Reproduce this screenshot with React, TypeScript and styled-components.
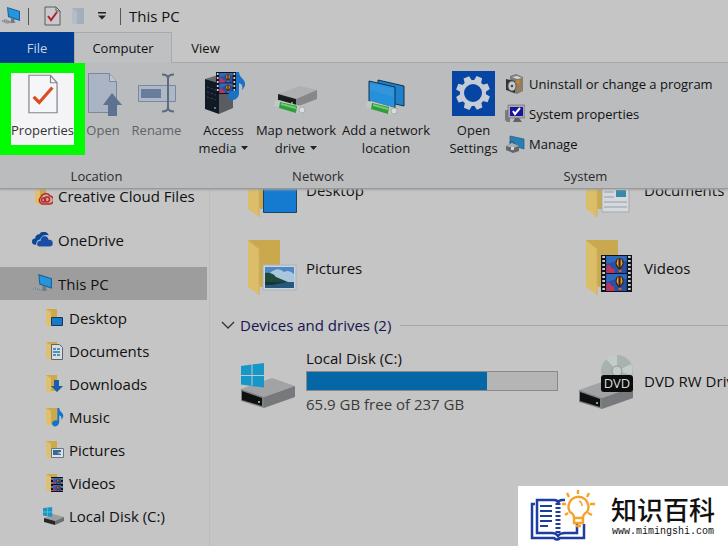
import React from "react";
import styled, { createGlobalStyle, css } from "styled-components";

const GlobalStyle = createGlobalStyle`
  *, *::before, *::after { box-sizing: border-box; }
  body { margin: 0; background: #c5c5c5; }
  button { font: inherit; color: inherit; background: none; border: 0; padding: 0; cursor: pointer; }
  svg { display: block; flex: none; }
`;

const Window = styled.div`
  height: 100vh;
  display: flex;
  flex-direction: column;
  overflow: hidden;
  background: #c5c5c5;
  color: #111;
  font-family: "Open Sans", "Noto Sans", sans-serif;
  font-size: 15px;
  line-height: 18px;
  white-space: nowrap;
`;

const TitleBar = styled.header`
  display: flex;
  align-items: center;
  height: 32px;
  flex: none;
  padding-left: 1px;
`;

const QuickButton = styled.button<{ $width: number }>`
  display: flex;
  justify-content: center;
  width: ${(p) => p.$width}px;
`;

const Separator = styled.span`
  width: 1px;
  height: 17px;
  background: #555;
`;

const WindowTitle = styled.h1`
  display: flex;
  align-items: center;
  gap: 8px;
  margin: 0 0 0 3px;
  font-size: 15px;
  font-weight: 400;
`;

const Tabs = styled.nav`
  display: flex;
  flex: none;
  height: 31px;
  border-bottom: 1px solid #a9a9aa;
`;

const Tab = styled.button<{ $kind: "file" | "active" | "plain"; $width: number }>`
  width: ${(p) => p.$width}px;
  height: 31px;
  font-size: 13px;
  ${(p) => p.$kind === "file" && css`background: #003d93; color: #c9d3e2;`}
  ${(p) =>
    p.$kind === "active" &&
    css`
      background: #bfc0c1;
      border: 1px solid #a9a9aa;
      border-bottom: 0;
    `}
`;

const Ribbon = styled.section`
  display: flex;
  flex: none;
  height: 126px;
  background: #bbbcbe;
  border-bottom: 1px solid #999;
  box-shadow: 0 1px 2px #a3a3a3;
  position: relative;
  font-size: 13px;
`;

const Group = styled.div<{ $width?: number }>`
  display: flex;
  flex-direction: column;
  ${(p) => (p.$width ? css`width: ${p.$width}px; flex: none;` : css`flex: 1;`)}
  & + &::before {
    content: "";
    position: absolute;
    width: 1px;
    height: 118px;
    margin: 3px 0 0 -1px;
    background: #a6a6a8;
  }
`;

const GroupTools = styled.div`
  display: flex;
  align-items: flex-start;
  height: 104px;
`;

const GroupLabel = styled.div`
  text-align: center;
  color: #2b2b2b;
`;

const Tool = styled.button<{ $width: number; $disabled?: boolean }>`
  display: flex;
  flex-direction: column;
  align-items: center;
  width: ${(p) => p.$width}px;
  height: 92px;
  padding-top: 6px;
  color: ${(p) => (p.$disabled ? "#5f6268" : "#161616")};
  svg.icon { margin-bottom: 4px; }
`;

const HighlightedTool = styled(Tool)`
  border: 10px solid #00fc00;
  border-width: 10px 11px;
  padding-top: 0;
  background: #f4f4f7;
  color: #333;
  svg.icon { margin: 1px 0 7px; }
`;

const ToolLine = styled.span`
  display: flex;
  align-items: center;
  justify-content: center;
  gap: 5px;
  height: 18px;
`;

const CommandList = styled.div`
  display: flex;
  flex-direction: column;
  padding: 6px 0 0 1px;
`;

const Command = styled.button`
  display: flex;
  align-items: center;
  gap: 4px;
  height: 30px;
  text-align: left;
`;

const Body = styled.div`
  display: flex;
  flex: 1;
  min-height: 0;
  overflow: hidden;
`;

const Sidebar = styled.nav`
  width: 210px;
  flex: none;
  border-right: 1px solid #bcbcbc;
`;

const Tree = styled.ul`
  list-style: none;
  margin: -10px 2px 0 0;
  padding: 0;
`;

const SubTree = styled.ul`
  list-style: none;
  margin: 0;
  padding: 1px 0 0;
`;

const TreeItem = styled.li<{ $spaced?: boolean }>`
  margin-bottom: ${(p) => (p.$spaced ? 11 : 0)}px;
`;

const TreeButton = styled.button<{ $nested?: boolean; $selected?: boolean }>`
  display: flex;
  align-items: center;
  gap: 5px;
  width: 100%;
  height: 33px;
  padding-left: ${(p) => (p.$nested ? 43 : 32)}px;
  background: ${(p) => (p.$selected ? "#9d9d9d" : "transparent")};
`;

const Main = styled.main`
  flex: 1;
  min-width: 0;
  overflow: hidden;
  padding-left: 11px;
`;

const Folders = styled.div`
  display: grid;
  grid-template-columns: repeat(2, 338px);
  grid-auto-rows: 78px;
  margin-top: -38px;
  padding-left: 25px;
`;

const FolderItem = styled.button`
  display: flex;
  align-items: center;
  gap: 8px;
  text-align: left;
`;

const SectionHeading = styled.h2`
  display: flex;
  align-items: center;
  gap: 5px;
  margin: 6px 0 0;
  height: 24px;
  font-size: 15px;
  font-weight: 400;
  color: #14144f;
  &::after {
    content: "";
    flex: 1;
    height: 1px;
    margin-left: 4px;
    background: #a6a6a6;
  }
`;

const Drives = styled.div`
  display: grid;
  grid-template-columns: repeat(2, 338px);
  padding: 10px 0 0 19px;
`;

const Drive = styled.div`
  display: flex;
  align-items: center;
  gap: 10px;
  height: 68px;
`;

const DriveInfo = styled.div`
  display: flex;
  flex-direction: column;
  gap: 4px;
`;

const Meter = styled.div`
  width: 252px;
  height: 20px;
  border: 1px solid #898989;
  background: #b5b5b5;
`;

const MeterFill = styled.div`
  height: 100%;
  background: #0567a5;
`;

const Muted = styled.span`
  color: #3b3b3b;
`;

const Watermark = styled.aside`
  position: absolute;
  right: 0;
  bottom: 0;
  display: flex;
  align-items: center;
  gap: 14px;
  width: 210px;
  height: 60px;
  padding-left: 12px;
  background: #fff;
  color: #111;
`;

const Brand = styled.div`
  text-align: center;
`;

const BrandName = styled.div`
  font: 500 26px/32px "Noto Sans CJK SC", sans-serif;
`;

const BrandUrl = styled.div`
  font: 10px/14px "Liberation Mono", monospace;
`;

/* ---------- icons ---------- */

const Monitor = ({ size = 20 }: { size?: number }) => (
  <svg width={size} height={size} viewBox="0 0 20 20">
    <path d="M6 1 19 5v10L7 11z" fill="#1c5f94" />
    <path d="M7 2.300 18 5.800v7.800L8 10.200z" fill="#2496dc" />
    <path d="m10 12 4 1.500-1 1.800 2 1-4 1-3-1.500 2-.8z" fill="#6d7880" />
    <path d="m0 15 5-2 6 3-5 2z" fill="#9da5aa" />
    <path d="m1 15 8 2M3 14l8 2.500" stroke="#777f84" strokeDasharray="1 1" />
  </svg>
);

const CheckPage = ({ width, height, className }: { width: number; height: number; className?: string }) => (
  <svg className={className} width={width} height={height} viewBox="0 0 32 42" fill="none">
    <path d="M1 1h23l7 8v32H1z" fill="#f5f6fa" stroke="#83858a" strokeWidth="1.3" />
    <path d="M24 1v8h7" stroke="#83858a" strokeWidth="1.3" />
    <path d="m6 24 6 6 14-16" stroke="#d94e1c" strokeWidth="3.4" />
  </svg>
);

const QuickCheck = () => (
  <svg width="17" height="20" viewBox="0 0 17 20" fill="none">
    <path d="M1 1h11l4 4v14H1z" fill="#c9c9cd" stroke="#5c5c5f" />
    <path d="M12 1v4h4" stroke="#5c5c5f" />
    <path d="m4 10 3 4 6-8" stroke="#b0202b" strokeWidth="2" />
  </svg>
);

const QuickFolder = () => (
  <svg width="14" height="19" viewBox="0 0 14 19">
    <path d="M1 1h12v16H4z" fill="#a5afba" />
    <path d="m1 1 5 4v13l-5-2z" fill="#b2bdca" />
  </svg>
);

const Customize = () => (
  <svg width="8" height="8" viewBox="0 0 8 8">
    <path d="M0 0h8v1.5H0zM0 3.5h8L4 7.5z" fill="#222" />
  </svg>
);

const Caret = () => (
  <svg width="7" height="4" viewBox="0 0 7 4">
    <path d="M0 0h7L3.500 4z" fill="#222" />
  </svg>
);

const OpenIcon = () => (
  <svg className="icon" width="38" height="48" viewBox="0 0 38 48">
    <path d="M4.500 4.500h21l7 8v31h-28z" fill="#aab4c4" stroke="#7888a0" />
    <path d="M25.500 4.500v8h7" fill="#bfc6d2" stroke="#7888a0" />
    <path d="m28 24 10 12h-5v11h-9V36h-5z" fill="#5c7290" />
  </svg>
);

const RenameIcon = () => (
  <svg className="icon" width="40" height="48" viewBox="0 0 40 48" fill="none">
    <path d="M1.500 16.500h37v16h-37z" fill="#adb7c6" stroke="#7888a0" />
    <path d="M4 20h20v9H4z" fill="#687d99" />
    <path d="M25 5.500c4 0 6 1 6 4v29c0 3-2 4-6 4M37 5.500c-4 0-6 1-6 4v29c0 3 2 4 6 4" stroke="#5c6b80" strokeWidth="2" />
  </svg>
);

const Note = ({ x = 0, y = 0, scale = 1 }: { x?: number; y?: number; scale?: number }) => (
  <g transform={`translate(${x} ${y}) scale(${scale})`}>
    <path d="M8 0h3c0 6 7 7 6 13-1 3-2 4-3 5 1-4 0-6-3-7v10c0 4-3 7-6 7s-5-2-5-4c0-4 4-6 8-5z" fill="#1673c6" />
  </g>
);

const FilmStrip = ({ x, y, w, h }: { x: number; y: number; w: number; h: number }) => {
  const half = (h - 3) / 2;
  const edge = w * 0.17;
  const inner = w - edge * 2;
  return (
    <g transform={`translate(${x} ${y})`}>
      <path d={`M0 0h${w}v${h}H0z`} fill="#11131a" />
      {[1, 2 + half].map((top) => (
        <g key={top} transform={`translate(${edge} ${top}) scale(${inner / 20} ${half / 16})`}>
          <path d="M0 0h20v16H0z" fill="#2450a6" />
          <path d="M0 0h20v5Q10 3 0 8z" fill="#2f69bd" />
          <path d="M0 9l3-1 2 3 3 1v4H0z" fill="#b8365e" />
          <path d="M9 6q0-4 4-4t4 4q0 4-4 7-4-3-4-7z" fill="#3a2018" />
          <path d="M11 3h1v8l-2-4zM14 3h1l1 4-2 4z" fill="#e3a02b" />
          <path d="M12 13h3v2h-3z" fill="#c9632b" />
        </g>
      ))}
      <path
        d={`M${edge / 2} 1v${h - 2}M${w - edge / 2} 1v${h - 2}`}
        stroke="#cfd2d2"
        strokeWidth={edge * 0.5}
        strokeDasharray="2 2"
      />
    </g>
  );
};

const AccessIcon = () => (
  <svg className="icon" width="44" height="48" viewBox="0 0 44 48">
    <path d="m3 10 13-4 15 3-14 5z" fill="#676b70" />
    <path d="m3 10 14 4v31L3 40z" fill="#111923" />
    <path d="m17 14 14-4v29l-14 6z" fill="#595c61" />
    <path d="m5 18 9 3M5 23l9 3M5 28l9 3" stroke="#294779" strokeDasharray="2 2" />
    <circle cx="13" cy="39" r="1" fill="#4fa0df" />
    <FilmStrip x={14} y={3} w={20} h={22} />
    <Note x={26} y={3} />
  </svg>
);

const NetworkPipe = ({ y }: { y: number }) => (
  <g transform={`translate(0 ${y})`}>
    <path d="m2 0 4-1 25 7v5l-4 2L1 5z" fill="#c2c9c5" />
    <path d="m7 1 17 4-1 7L6 7z" fill="#2f9d3c" />
    <path d="m8 3 15 4" stroke="#73cc6e" strokeWidth="2" />
    <ellipse cx="29" cy="9" rx="3" ry="3" fill="#dadddb" stroke="#93a095" strokeWidth=".7" />
  </g>
);

const MapDriveIcon = () => (
  <svg className="icon" width="46" height="48" viewBox="0 0 46 48">
    <path d="m5 25 22-8 17 4-21 9z" fill="#aeb0b2" />
    <path d="m5 25 18 5v8L5 32z" fill="#191b1c" />
    <path d="m23 30 21-9v9l-21 8z" fill="#85878a" />
    <circle cx="19" cy="34" r="1" fill="#79dd77" />
    <NetworkPipe y={32} />
  </svg>
);

const AddLocationIcon = () => (
  <svg className="icon" width="42" height="48" viewBox="0 0 42 48">
    <path d="m13 11 26 6v20l-26-6z" fill="#1d82cb" stroke="#12304c" />
    <path d="m4 12 26 6v21L4 32z" fill="#2790dc" stroke="#12304c" />
    <path d="m5 14 24 6v8L5 21z" fill="#43a1df" opacity=".4" />
    <NetworkPipe y={33} />
  </svg>
);

const SettingsIcon = () => (
  <svg className="icon" width="43" height="48" viewBox="0 0 43 48">
    <path d="M0 2h43v45H0z" fill="#0745a5" />
    <g transform="translate(21 24)" fill="#c6ccd5">
      {[0, 45, 90, 135, 180, 225, 270, 315].map((a) => (
        <path key={a} d="M-4-11-3-17H3L4-11z" transform={`rotate(${a + 22})`} />
      ))}
      <circle r="11" fill="none" stroke="#c6ccd5" strokeWidth="4" />
    </g>
  </svg>
);

const UninstallIcon = () => (
  <svg width="20" height="22" viewBox="0 0 20 22">
    <path d="m5 3 6-2 7 3v14l-6 3-7-2z" fill="#7b7d79" />
    <path d="m7 4 5-1 5 2-5 1z" fill="#d6d5cf" />
    <path d="m12 7 5-2v13l-5 2z" fill="#9a7d58" />
    <circle cx="13" cy="9" r="2" fill="#c98132" />
    <path d="m1 6 9 2v12l-9-3z" fill="#303335" />
    <ellipse cx="7" cy="13" rx="4" ry="5" fill="#c6c9c8" stroke="#606466" />
    <circle cx="7" cy="13" r="1.300" fill="#454849" />
  </svg>
);

const SystemIcon = () => (
  <svg width="20" height="22" viewBox="0 0 20 22">
    <path d="M0 7h5v12H2l-2-2z" fill="#787b80" />
    <path d="M3 2h17v13H3z" fill="#a8a9a8" stroke="#646666" strokeWidth=".6" />
    <path d="M5 4h13v9H5z" fill="#1515a0" />
    <path d="m8 8 2 3 5-6" fill="none" stroke="#fff" strokeWidth="2" />
    <path d="M10 15h4l3 4H8z" fill="#5f6262" />
  </svg>
);

const ManageIcon = () => (
  <svg width="20" height="20" viewBox="0 0 20 20">
    <path d="m5 2 14 3v10L5 11z" fill="#277fb8" stroke="#295a79" strokeWidth=".7" />
    <path d="m1 12 6-3 7 3v5l-6 2-7-3z" fill="#62676b" />
    <path d="m1 12 6-3 7 3-6 2z" fill="#a9afb2" />
    <path d="M4 9q3-4 6 1" fill="none" stroke="#4f5356" />
    <path d="M6 13h3v3H6z" fill="#d4d6d3" />
  </svg>
);

const Cloud = () => (
  <svg width="21" height="15" viewBox="0 0 20 14">
    <path d="M4 12H3a3 3 0 0 1 0-6 4 4 0 0 1 4-4 5 5 0 0 1 9 1q-6-1-8 4-4 0-4 5z" fill="#0c4694" />
    <path d="M7 14a3 3 0 0 1 1-6 4 4 0 0 1 8-1 3.500 3.500 0 0 1 1 7z" fill="#164fa5" stroke="#c5c5c5" strokeWidth=".6" />
  </svg>
);

type Badge = "cloud" | "desktop" | "document" | "download" | "music" | "picture" | "video";

const SmallFolder = ({ badge }: { badge: Badge }) => (
  <svg width="21" height="20" viewBox="0 0 21 20">
    <path d="M3 1h11v16H7z" fill="#cda94c" />
    <path d="m3 1 5 3v15l-5-2z" fill="#dec06e" />
    {badge === "desktop" && <path d="M8.500 9.500h11v8h-11z" fill="#1679ca" stroke="#14385d" />}
    {badge === "document" && (
      <>
        <path d="M8.500 3.500h8l3 3v12h-11z" fill="#d9dde0" stroke="#596470" />
        <path d="M10 8h3m1 0h3M10 11h7M10 14h3m1 0h3" stroke="#2876aa" strokeWidth="1.500" />
      </>
    )}
    {badge === "download" && <path d="M11 6h5v6h4l-6 6-6-6h3z" fill="#195fa8" />}
    {badge === "music" && <Note x={9} y={1} scale={0.66} />}
    {badge === "picture" && (
      <>
        <path d="M8.500 8.500h12v9h-12z" fill="#dfe2e4" stroke="#687582" />
        <path d="M10 10h8v2l-4 1 4 1v1h-8z" fill="#356a98" />
      </>
    )}
    {badge === "video" && <FilmStrip x={8} y={4} w={12} h={15} />}
    {badge === "cloud" && (
      <g fill="none" stroke="#bd2921" strokeWidth="1.500">
        <path d="M10 18a4 4 0 0 1-1-7 5 5 0 0 1 9-1 4 4 0 0 1-1 8z" fill="#c5afaa" />
        <circle cx="11.500" cy="14" r="2" />
        <circle cx="15" cy="13.500" r="2.500" />
      </g>
    )}
  </svg>
);

const WindowsFlag = ({ x = 0, y = 0, scale = 1 }: { x?: number; y?: number; scale?: number }) => (
  <g transform={`translate(${x} ${y}) scale(${scale})`} fill="#1797c7">
    <path d="M0 3 10.500 1.500V12H0zM11.500 1.300 23 0v12H11.500zM0 13h10.500v10L0 21.500zM11.500 13H23v11.500l-11.500-1.300z" />
  </g>
);

const SmallDisk = () => (
  <svg width="21" height="18" viewBox="0 0 21 18">
    <path d="m1 11 9-4 11 3-9 4z" fill="#9c9ea0" />
    <path d="m1 11 11 3v4L1 15z" fill="#25282a" />
    <path d="m12 14 9-4v4l-9 4z" fill="#6d6f72" />
    <WindowsFlag scale={0.4} />
  </svg>
);

const BigFolder = ({ badge }: { badge: Badge }) => (
  <svg width="52" height="58" viewBox="0 0 52 58">
    <path d="M2 1h32v47H14z" fill="#c9a84e" />
    <path d="m2 1 11 9v46L2 48z" fill="#dcbd68" />
    <path d="m2 1 11 9v46" fill="none" stroke="#cfb064" />
    {badge === "desktop" && <path d="M17.500 27.500h33v24h-33z" fill="#147bd0" stroke="#164469" />}
    {badge === "document" && (
      <>
        <path d="M18 14h27v37H18z" fill="#d5d9dc" stroke="#a3a8ac" />
        <path d="M20 26h10M20 31h10M20 36h10M20 41h23M20 46h23M20 21h23" stroke="#8f9da8" />
        <path d="M32 29h10v7H32z" fill="#3a88a9" />
      </>
    )}
    {badge === "picture" && (
      <>
        <path d="M17 26h33v25H17z" fill="#c9d3d9" stroke="#a4b4c0" />
        <path d="M19 28h29v21H19z" fill="#4f86c3" />
        <path d="M24 34q8-7 14-1 5-3 10 2v8H24z" fill="#a9c6de" />
        <path d="M19 34q7-1 11 4l12 5H19z" fill="#1d4a38" />
        <path d="M19 43h29v6H19z" fill="#28577c" />
        <path d="M19 43h22l-15 3h-7z" fill="#17333c" />
      </>
    )}
    {badge === "video" && <FilmStrip x={17} y={16} w={31} h={37} />}
  </svg>
);

const DiskBase = () => (
  <>
    <path d="m1 38 31-11 23 8-31 11z" fill="#a2a3a5" />
    <path d="m1 38 23 8v11L1 50z" fill="#7f8183" />
    <path d="m24 46 31-11v11L24 57z" fill="#77797c" />
    <path d="m2 40 20 7v8L2 49z" fill="#0e1011" />
    <circle cx="19" cy="51" r="1" fill="#b4d7b4" />
  </>
);

const LocalDiskIcon = () => (
  <svg width="56" height="56" viewBox="0 2 56 56">
    <DiskBase />
    <WindowsFlag x={1} y={12} />
  </svg>
);

const DvdIcon = () => (
  <svg width="56" height="58" viewBox="0 0 56 58">
    <DiskBase />
    <circle cx="39" cy="19" r="16" fill="#a9b2af" />
    <path d="M39 19 28 7a16 16 0 0 1 11-4zM39 19l14-7a16 16 0 0 1 1 11z" fill="#c3cccb" />
    <circle cx="39" cy="19" r="5" fill="#c5cbc9" stroke="#929a98" />
    <rect x="23" y="23" width="32" height="17" rx="3" fill="#0b0c0c" />
    <text x="39" y="36" textAnchor="middle" fontFamily="Open Sans" fontSize="13" fill="#ddd">DVD</text>
  </svg>
);

const Chevron = () => (
  <svg width="14" height="8" viewBox="0 0 14 8">
    <path d="m1 1 6 6 6-6" fill="none" stroke="#333" strokeWidth="1.300" />
  </svg>
);

const BookIcon = () => (
  <svg width="67" height="52" viewBox="0 0 67 52" fill="none">
    <g stroke="#1d3e9f" strokeWidth="2.500">
      <path d="M5 14H2v34h22q3 3 6 0h24V34" />
      <path d="M24 10H7v33h15q4 0 6 3 2-3 7-3h12V34M24 10q4 0 4 3M28 13q1-3 4-3h3" />
      <path d="M10 16h12M10 21h12M10 26h12M10 31h12M10 36h8" strokeWidth="2" />
      <path d="M28 13v32" strokeWidth="5" strokeDasharray="2 2" />
    </g>
    <g stroke="#f5a22c" strokeWidth="2.400">
      <path d="M44 28q0-4-4-6a10 10 0 1 1 17 0q-4 2-4 6z" />
      <path d="M44 29v4h9v-4M46 36h5M48 0v4M37 3l2 4M59 3l-2 4M32 14h4M60 14h5M35 25l3-2M62 25l-4-2" />
      <path d="M49 11q3 1 3 5" strokeWidth="1.500" />
    </g>
  </svg>
);

/* ---------- page ---------- */

const places: { name: string; badge: Badge }[] = [
  { name: "Desktop", badge: "desktop" },
  { name: "Documents", badge: "document" },
  { name: "Downloads", badge: "download" },
  { name: "Music", badge: "music" },
  { name: "Pictures", badge: "picture" },
  { name: "Videos", badge: "video" },
];

const folders: { name: string; badge: Badge }[] = [
  { name: "Desktop", badge: "desktop" },
  { name: "Documents", badge: "document" },
  { name: "Pictures", badge: "picture" },
  { name: "Videos", badge: "video" },
];

export default function App() {
  return (
    <Window>
      <GlobalStyle />
      <TitleBar>
        <Monitor />
        <QuickButton $width={14} aria-label="Window menu"><Separator /></QuickButton>
        <QuickButton $width={34} aria-label="Properties"><QuickCheck /></QuickButton>
        <QuickButton $width={18} aria-label="New folder"><QuickFolder /></QuickButton>
        <QuickButton $width={30} aria-label="Customize toolbar"><Customize /></QuickButton>
        <WindowTitle><Separator />This PC</WindowTitle>
      </TitleBar>
      <Tabs>
        <Tab $kind="file" $width={74}>File</Tab>
        <Tab $kind="active" $width={98}>Computer</Tab>
        <Tab $kind="plain" $width={67}>View</Tab>
      </Tabs>
      <Ribbon>
        <Group $width={193}>
          <GroupTools>
            <HighlightedTool $width={85}>
              <CheckPage className="icon" width={30} height={40} />
              <ToolLine>Properties</ToolLine>
            </HighlightedTool>
            <Tool $width={36} $disabled><OpenIcon /><ToolLine>Open</ToolLine></Tool>
            <Tool $width={71} $disabled><RenameIcon /><ToolLine>Rename</ToolLine></Tool>
          </GroupTools>
          <GroupLabel>Location</GroupLabel>
        </Group>
        <Group $width={250}>
          <GroupTools>
            <Tool $width={61}>
              <AccessIcon />
              <ToolLine>Access</ToolLine>
              <ToolLine>media <Caret /></ToolLine>
            </Tool>
            <Tool $width={84}>
              <MapDriveIcon />
              <ToolLine>Map network</ToolLine>
              <ToolLine>drive <Caret /></ToolLine>
            </Tool>
            <Tool $width={96}>
              <AddLocationIcon />
              <ToolLine>Add a network</ToolLine>
              <ToolLine>location</ToolLine>
            </Tool>
          </GroupTools>
          <GroupLabel>Network</GroupLabel>
        </Group>
        <Group>
          <GroupTools>
            <Tool $width={61}>
              <SettingsIcon />
              <ToolLine>Open</ToolLine>
              <ToolLine>Settings</ToolLine>
            </Tool>
            <CommandList>
              <Command><UninstallIcon />Uninstall or change a program</Command>
              <Command><SystemIcon />System properties</Command>
              <Command><ManageIcon />Manage</Command>
            </CommandList>
          </GroupTools>
          <GroupLabel>System</GroupLabel>
        </Group>
      </Ribbon>
      <Body>
        <Sidebar aria-label="Folders">
          <Tree>
            <TreeItem $spaced><TreeButton><SmallFolder badge="cloud" />Creative Cloud Files</TreeButton></TreeItem>
            <TreeItem $spaced><TreeButton><Cloud />OneDrive</TreeButton></TreeItem>
            <TreeItem>
              <TreeButton $selected><Monitor size={21} />This PC</TreeButton>
              <SubTree>
                {places.map((p) => (
                  <TreeItem key={p.name}>
                    <TreeButton $nested><SmallFolder badge={p.badge} />{p.name}</TreeButton>
                  </TreeItem>
                ))}
                <TreeItem><TreeButton $nested><SmallDisk />Local Disk (C:)</TreeButton></TreeItem>
              </SubTree>
            </TreeItem>
          </Tree>
        </Sidebar>
        <Main>
          <Folders>
            {folders.map((f) => (
              <FolderItem key={f.name}><BigFolder badge={f.badge} />{f.name}</FolderItem>
            ))}
          </Folders>
          <SectionHeading><Chevron />Devices and drives (2)</SectionHeading>
          <Drives>
            <Drive>
              <LocalDiskIcon />
              <DriveInfo>
                <span>Local Disk (C:)</span>
                <Meter role="meter" aria-label="Used space" aria-valuemin={0} aria-valuemax={237} aria-valuenow={171}>
                  <MeterFill style={{ width: `${(171.1 / 237) * 100}%` }} />
                </Meter>
                <Muted>65.9 GB free of 237 GB</Muted>
              </DriveInfo>
            </Drive>
            <Drive>
              <DvdIcon />
              <span>DVD RW Drive (D:)</span>
            </Drive>
          </Drives>
        </Main>
      </Body>
      <Watermark>
        <BookIcon />
        <Brand>
          <BrandName>知识百科</BrandName>
          <BrandUrl>www.mimingshi.com</BrandUrl>
        </Brand>
      </Watermark>
    </Window>
  );
}
